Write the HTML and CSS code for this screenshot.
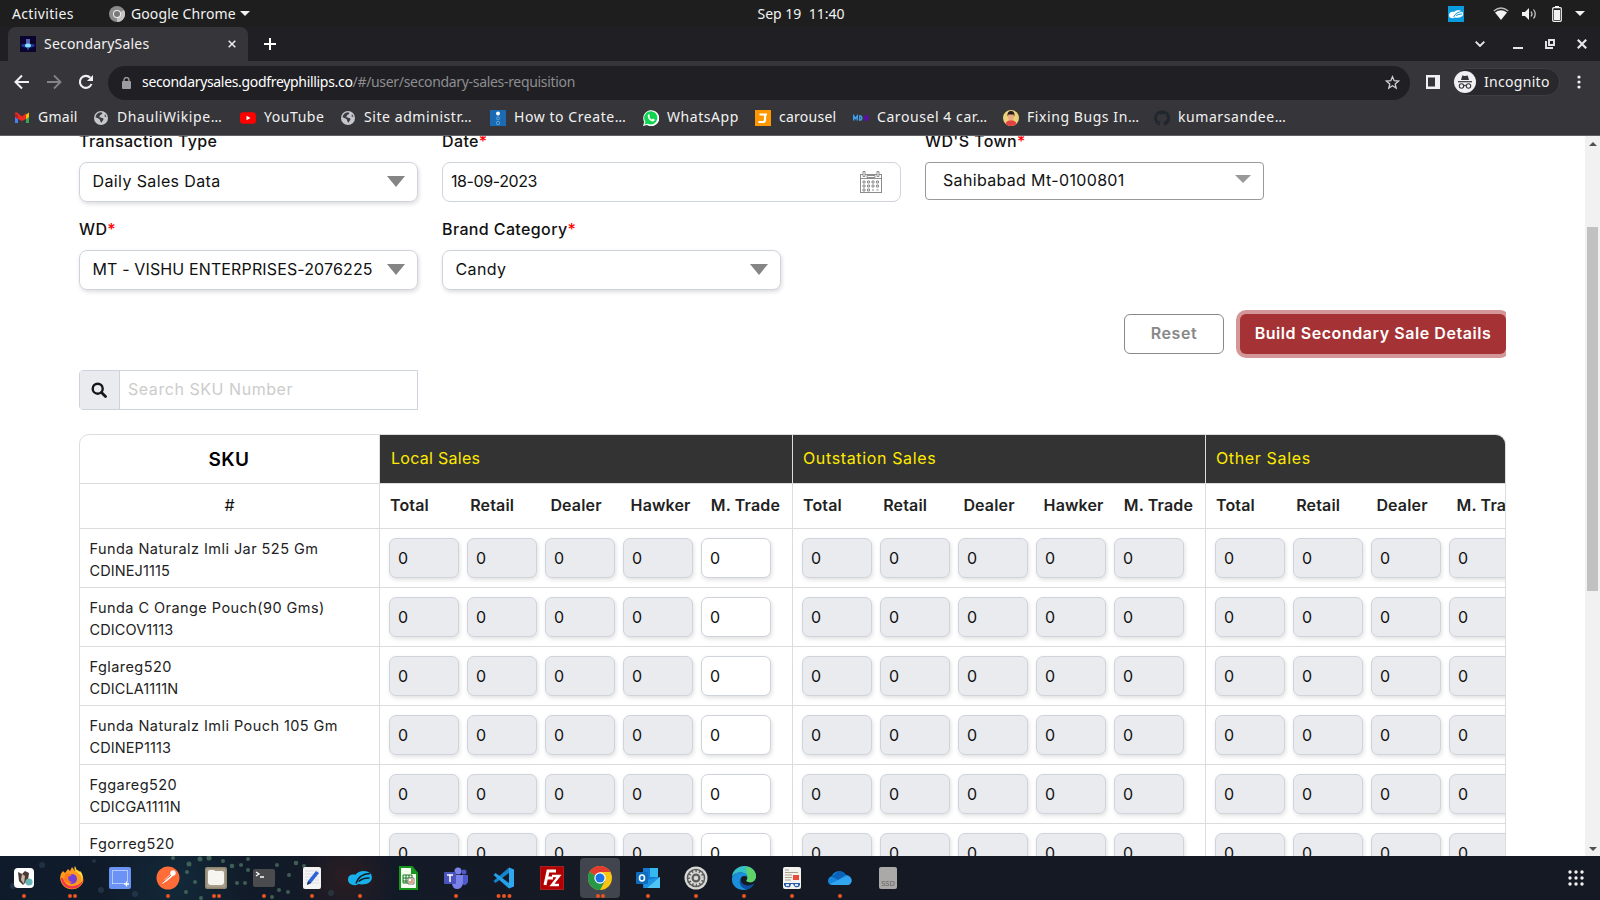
FILE: index.html
```html
<!DOCTYPE html>
<html lang="en">
<head>
<meta charset="utf-8">
<title>SecondarySales</title>
<link rel="stylesheet" href="styles.css">
</head>
<body>
<div class="screen">
  <header class="topbar">
    <span class="activities">Activities</span>
    <svg class="app-icon" width="16" height="16" viewBox="0 0 16 16"><circle cx="8" cy="8" r="8" fill="#8b8b8b"/><path d="M8 8L15 4A8 8 0 0 1 8 16z" fill="#c4c4c4"/><circle cx="8" cy="8" r="4" fill="#eee"/><circle cx="8" cy="8" r="3" fill="#777"/></svg>
    <span class="app-name">Google Chrome</span>
    <svg width="10" height="5" viewBox="0 0 10 5"><path d="M0 0h10L5 5z" fill="#f2f2f2"/></svg>
    <span class="clock">Sep 19&nbsp; 11:40</span>
    <div class="tray">
      <svg class="zs" width="16" height="16" viewBox="0 0 16 16"><rect width="16" height="16" fill="#0a9ade"/><path d="M1 9.500C1 6 4 5.500 6 6c2-2.500 7-2.500 8.500 0 1.500 3 0 5-3.500 5.500-1.500.4-3 .3-4 0-2 1.200-6 1-6-2z" fill="#fff"/><path d="M14 5.500Q8 6 5.500 11M8 9.500q3-1.500 6-1.500" stroke="#0a9ade" fill="none"/></svg>
      <svg class="wifi" width="16" height="14" viewBox="0 0 16 14"><path d="M.8 4Q8-2 15.200 4" stroke="#bbb" fill="none" stroke-width="1.300"/><path d="M2 5.500Q8 1 14 5.500L8 13z" fill="#f2f2f2"/></svg>
      <svg class="vol" width="16" height="14" viewBox="0 0 16 14"><path d="M0 5h3l4-4v12L3 9H0z" fill="#f2f2f2"/><path d="M9 4.500q2 2.500 0 5M11.500 2.500q3.500 4.500 0 9" fill="none" stroke="#ccc" stroke-width="1.200"/></svg>
      <svg class="bat" width="10" height="16" viewBox="0 0 10 16"><path d="M3 0h4v2H3z" fill="#f2f2f2"/><rect x=".7" y="1.700" width="8.600" height="13.600" rx="1" fill="none" stroke="#f2f2f2" stroke-width="1.200"/><path d="M2 4h6v10H2z" fill="#f2f2f2"/></svg>
      <svg width="10" height="5" viewBox="0 0 10 5"><path d="M0 0h10L5 5z" fill="#f2f2f2"/></svg>
    </div>
  </header>

  <div class="tabstrip">
    <div class="tab">
      <svg width="16" height="16" viewBox="0 0 16 16"><rect width="16" height="16" fill="#0b0430"/><ellipse cx="8" cy="9.500" rx="7" ry="2" fill="#1b3c9b"/><path d="M6 3h4v7H6z" fill="#5763b0"/><ellipse cx="8" cy="9.500" rx="3" ry="2" fill="#8de0ff"/><path d="M7 11h2l-1 4z" fill="#2b7de0"/></svg>
      <span class="tab-title">SecondarySales</span>
      <svg class="tab-close" width="8" height="8" viewBox="0 0 8 8"><path d="M.7.7l6.600 6.600M7.300.7L.7 7.300" stroke="#e8e8e8" stroke-width="1.600"/></svg>
    </div>
    <svg class="newtab" width="12" height="12" viewBox="0 0 12 12"><path d="M6 0v12M0 6h12" stroke="#fff" stroke-width="2"/></svg>
    <div class="winctl">
      <svg width="10" height="6" viewBox="0 0 10 6"><path d="M.7.7L5 5 9.300.7" stroke="#e6e6ea" stroke-width="1.900" fill="none"/></svg>
      <svg width="10" height="10" viewBox="0 0 10 10"><path d="M0 9h10" stroke="#e6e6ea" stroke-width="2"/></svg>
      <svg width="10" height="10" viewBox="0 0 10 10"><path d="M4 1h5v5H4zM1 2v7h7" stroke="#e6e6ea" stroke-width="1.900" fill="none"/></svg>
      <svg width="10" height="10" viewBox="0 0 10 10"><path d="M.8.8l8.400 8.400M9.200.8L.8 9.200" stroke="#e6e6ea" stroke-width="2.200"/></svg>
    </div>
  </div>

  <div class="toolbar">
    <svg class="nav" width="16" height="16" viewBox="0 0 16 16"><path d="M15 8H2M8 1.500L1.500 8 8 14.500" stroke="#f1f1f3" stroke-width="2" fill="none"/></svg>
    <svg class="nav" width="16" height="16" viewBox="0 0 16 16"><path d="M1 8h13M8 1.500L14.500 8 8 14.500" stroke="#848488" stroke-width="1.800" fill="none"/></svg>
    <svg class="nav" width="16" height="16" viewBox="0 0 16 16"><path d="M13.500 10A6 6 0 1 1 12.300 3.800" stroke="#f1f1f3" stroke-width="2.100" fill="none"/><path d="M15 1v6H9z" fill="#f1f1f3"/></svg>
    <div class="omnibox">
      <svg width="9" height="12" viewBox="0 0 9 12"><rect y="4" width="9" height="8" rx="1" fill="#9c9ca3"/><path d="M2 5V3a2.500 2.500 0 0 1 5 0v2" stroke="#9c9ca3" stroke-width="1.300" fill="none"/></svg>
      <span class="url"><b>secondarysales.godfreyphillips.co</b>/#/user/secondary-sales-requisition</span>
      <svg class="star" width="15" height="15" viewBox="0 0 15 15"><path d="M7.500 1.700l1.700 4 4.300.4-3.300 2.800 1 4.200-3.700-2.300-3.700 2.300 1-4.200L1.500 6.100l4.300-.4z" stroke="#cfcfd3" stroke-width="1.300" fill="none"/></svg>
    </div>
    <svg class="panel" width="14" height="14" viewBox="0 0 14 14"><rect width="14" height="14" fill="#f1f1f3"/><rect x="2" y="2.500" width="7" height="9" fill="#36363a"/></svg>
    <div class="incognito">
      <svg width="22" height="22" viewBox="0 0 22 22"><circle cx="11" cy="11" r="11" fill="#f1f1f3"/><path d="M7 9l1.300-4.500 2.700.5 2.700-.5L15 9z" fill="#35363a"/><path d="M4 10.700h14" stroke="#35363a" stroke-width="1.200"/><g fill="none" stroke="#35363a" stroke-width="1.100"><circle cx="7.500" cy="15" r="2.200"/><circle cx="14.500" cy="15" r="2.200"/><path d="M9.700 14.700q1.300-.8 2.600 0"/></g></svg>
      <span>Incognito</span>
    </div>
    <svg class="kebab" width="4" height="14" viewBox="0 0 4 14"><g fill="#f1f1f3"><circle cx="2" cy="2" r="1.600"/><circle cx="2" cy="7" r="1.600"/><circle cx="2" cy="12" r="1.600"/></g></svg>
  </div>

  <nav class="bookmarks">
    <a class="tight"><svg width="16" height="16" viewBox="0 0 16 16"><path d="M1 3.500V13h3V6z" fill="#4a7df0"/><path d="M15 3.500V13h-3V6z" fill="#33a852"/><path d="M11.500 5L15 2.500V7l-3 2z" fill="#fbbc05"/><path d="M1 7V3q1-1.500 3 .3l4 3.200 4-3.200V9L8 11 4 9z" fill="#ea2b20"/><path d="M1 3.500L4 5v4L1 7z" fill="#b51f2a"/></svg><span>Gmail</span></a>
    <a class="cut"><svg width="16" height="16" viewBox="0 0 16 16"><use href="#globe"/></svg><span>DhauliWikipe…</span></a>
    <a><svg width="16" height="16" viewBox="0 0 16 16"><rect y="2.300" width="16" height="11.500" rx="3" fill="#f00"/><path d="M6.500 5.800v4.500l4-2.250z" fill="#fff"/></svg><span>YouTube</span></a>
    <a class="cut"><svg width="16" height="16" viewBox="0 0 16 16"><g id="globe"><circle cx="8" cy="8" r="7" fill="#c5c7cd"/><path d="M8 2.300c2 .4 1.500 2 0 2.300S7.500 6.500 6 7l4 1.300c1.500.8-1 3.200-1.500 4.500-1.500-.5-.8-3-2.500-4L2.500 7.300A6 6 0 0 1 8 2.300zM12 4l1.500 3-2-.5z" fill="#3c3d43"/></g></svg><span>Site administr…</span></a>
    <a class="cut"><svg width="16" height="16" viewBox="0 0 16 16"><rect width="16" height="16" fill="#1a6bb3"/><circle cx="8" cy="3.500" r="2" fill="#fff"/><g fill="none" stroke="#5ea3d2"><circle cx="8" cy="8.300" r="1.500"/><circle cx="8" cy="13" r="1.700"/></g></svg><span>How to Create…</span></a>
    <a><svg width="16" height="16" viewBox="0 0 16 16"><path d="M0 16l1.200-4A8 8 0 1 1 4 15z" fill="#fff"/><path d="M1.600 14.500l.8-2.800a6.600 6.600 0 1 1 2.300 2z" fill="#10d34f"/><path d="M5 4.500l1.200-.3.800 2-.6.900q.9 1.700 2.500 2.300l1-.9 1.800.9c0 1.800-1.500 2.300-3 1.800C6.300 10.500 4 7.500 5 4.500z" fill="#fff"/></svg><span>WhatsApp</span></a>
    <a class="tight"><svg width="16" height="16" viewBox="0 0 16 16"><rect width="16" height="16" fill="#ff9800"/><path d="M4.500 4.500H12M10 4v6q0 2-2.300 2H3.500" stroke="#fff" stroke-width="2.200" fill="none"/></svg><span>carousel</span></a>
    <a class="cut"><svg width="16" height="16" viewBox="0 0 16 16"><path d="M.7 10.500V6l1.800 2.500L4.300 6v4.500M6.700 6v4h1.200q2-2 0-4z" stroke="#3fa0ef" stroke-width="1.400" fill="none"/><path d="M12.500 6v4h1.500q2-1 0-2 1.500-1 0-2z" stroke="#6a00c8" stroke-width="1.400" fill="none"/></svg><span>Carousel 4 car…</span></a>
    <a class="cut"><svg width="16" height="16" viewBox="0 0 16 16"><circle cx="8" cy="8" r="8" fill="#ecd17a"/><path d="M2.500 13.700q1-3.200 5.500-3.700 4.500.5 5.500 3.700a8 8 0 0 1-11 0z" fill="#e34242"/><ellipse cx="8" cy="6.500" rx="3" ry="4" fill="#e8aa84"/><path d="M4.500 6.500Q4 1 8 1t3.500 5.500L10.500 4.500h-5z" fill="#261b18"/></svg><span>Fixing Bugs In…</span></a>
    <a class="cut"><svg width="16" height="16" viewBox="0 0 16 16"><path d="M8 .3a7.800 7.800 0 0 0-2.500 15.200c.4 0 .5-.2.500-.4v-1.500c-2.200.5-2.700-1-2.700-1-.4-.9-.9-1.200-.9-1.200 1.200-.3 1.600 1 1.900 1.200.7.600 1.300.4 1.800.2.100-.5.3-.9.500-1.100C4.500 11.500 3 10.700 3 7.800c0-.8.300-1.500.8-2.100-.1-.5-.3-1.200.1-2.100 0 0 .7-.2 2.100.8q2-.5 4 0c1.500-1 2.100-.8 2.100-.8.400.9.200 1.600.1 2.100.5.600.8 1.300.8 2.100 0 2.900-1.500 3.700-3.500 3.900.4.300.6.800.6 1.500v2c0 .2.100.4.500.4A7.800 7.800 0 0 0 8 .3z" fill="#20262d"/></svg><span>kumarsandee…</span></a>
  </nav>

  <main class="viewport">
    <div class="content">
      <form class="filters">
        <div class="field w-sm"><label>Transaction Type</label><div class="select shadow"><span>Daily Sales Data</span><i class="caret"></i></div></div>
        <div class="field w-lg"><label>Date<em>*</em></label><div class="select date"><span>18-09-2023</span>
          <svg width="24" height="24" viewBox="0 0 24 24" fill="none" stroke="#8c8c8c"><rect x="1.500" y="4.500" width="21" height="18"/><path d="M1.500 8.500h21"/><path d="M4 1.500h2v5H4zM18 1.500h2v5h-2zM8 5.500h8v2H8z" fill="#fff"/><path d="M4 11h2v2H4zM8.500 11h2v2h-2zM13 11h2v2h-2zM17.500 11h2v2h-2zM4 15h2v2H4zM8.500 15h2v2h-2zM13 15h2v2h-2zM17.500 15h2v2h-2zM4 19h2v2H4zM8.500 19h2v2h-2zM13 20h2M17.500 20h2"/></svg></div></div>
        <div class="field w-sm"><label>WD'S Town<em>*</em></label><div class="select town"><span>Sahibabad Mt-0100801</span><i class="caret"></i></div></div>
        <div class="field w-sm"><label>WD<em>*</em></label><div class="select shadow"><span class="caps">MT - VISHU ENTERPRISES-2076225</span><i class="caret"></i></div></div>
        <div class="field w-sm"><label>Brand Category<em>*</em></label><div class="select shadow"><span>Candy</span><i class="caret"></i></div></div>
      </form>
      <div class="actions"><button class="reset">Reset</button><button class="build">Build Secondary Sale Details</button></div>
      <div class="search">
        <div class="addon"><svg width="16" height="16" viewBox="0 0 16 16"><circle cx="6.700" cy="6.700" r="5" fill="none" stroke="#15181b" stroke-width="2.400"/><path d="M10.500 10.500l4 4" stroke="#15181b" stroke-width="2.800" stroke-linecap="round"/></svg></div>
        <span>Search SKU Number</span>
      </div>
      <div class="sheet" id="sheet">
        <div class="cell sku-head">SKU</div><div class="cell group local">Local Sales</div><div class="cell group">Outstation Sales</div><div class="cell group">Other Sales</div>
        <div class="cell hash">#</div>
        <div class="cell heads"><b>Total</b><b>Retail</b><b>Dealer</b><b>Hawker</b><b>M. Trade</b></div>
        <div class="cell heads"><b>Total</b><b>Retail</b><b>Dealer</b><b>Hawker</b><b>M. Trade</b></div>
        <div class="cell heads"><b>Total</b><b>Retail</b><b>Dealer</b><b>M. Trade</b></div>
      </div>
    </div>
    <div class="scrollbar"><i class="up"></i><div class="thumb"></div><i class="down"></i></div>
  </main>

  <footer class="dock">
    <svg class="wallpaper" width="420" height="44" viewBox="0 0 420 44"><g fill="#4d7562" opacity=".75"><circle cx="173" cy="2" r="2"/><circle cx="189" cy="8" r="2.500"/><circle cx="200" cy="3" r="2.500"/><circle cx="209" cy="2" r="2.500"/><circle cx="187" cy="16" r="2"/><circle cx="195" cy="26" r="2"/><circle cx="186" cy="36" r="2"/><circle cx="201" cy="42" r="2"/><circle cx="223" cy="5" r="2"/><circle cx="232" cy="10" r="2.300"/><circle cx="241" cy="9" r="2"/><circle cx="248" cy="3" r="2"/><circle cx="237" cy="27" r="2"/><circle cx="245" cy="27" r="2"/><circle cx="248" cy="14" r="2"/><circle cx="277" cy="9" r="2"/><circle cx="289" cy="19" r="2"/><circle cx="296" cy="7" r="2.300"/><circle cx="288" cy="36" r="2"/><circle cx="272" cy="41" r="2"/><circle cx="279" cy="34" r="2"/><circle cx="304" cy="10" r="2"/></g><g fill="#33485c" opacity=".5"><circle cx="42" cy="9" r="3"/><circle cx="13" cy="30" r="3"/><circle cx="101" cy="34" r="3"/><circle cx="135" cy="38" r="3"/><circle cx="331" cy="37" r="3"/><circle cx="94" cy="5" r="2"/></g></svg>
    <div class="app"><svg viewBox="0 0 24 24"><rect x="2" y="2" width="20" height="20" rx="4" fill="#fff"/><path d="M6 6l4 2 3-3 4 2-1 7-5 5-4-4z" fill="#4a3a34"/><path d="M10 8l-1 6 3 4 1-8z" fill="#c9b8a9"/><circle cx="17" cy="16" r="3.600" fill="#66b7b5"/></svg><i data-n="1"></i></div>
    <div class="app"><svg viewBox="0 0 24 24"><path d="M12 1l3 4 3-1c5 5 7 10 4 14-4 7-16 7-20 0C-1 13 0 8 3 5l2 2 3-4 2 2z" fill="#ff9a1f"/><path d="M1 12c1 14 20 14 22 2-3 5-6 5-9 6-6 1-10-3-11-8z" fill="#f4354e"/><path d="M15 0q-2 4 3 7t3 9q4-7-1-11l-1 1q-3-2-4-6z" fill="#ffd83a"/><circle cx="12" cy="13" r="5" fill="#7440d8"/><path d="M5 8q4-2 7 1l-4 2q0 5 5 5-6 3-9-2z" fill="#ff7a1b"/></svg><i data-n="2"></i></div>
    <div class="app"><svg viewBox="0 0 24 24"><rect x="1" y="1" width="22" height="22" rx="2" fill="#6b93f5"/><path d="M4.500 17.500v-13h15v11M4.500 17.500H17" fill="none" stroke="#fff" stroke-dasharray="1 1"/><path d="M18.500 15.500v5M16 18h5" stroke="#fff" stroke-width="1.300"/></svg></div>
    <div class="app"><svg viewBox="0 0 24 24"><circle cx="12" cy="12" r="11.500" fill="#ff6c37"/><path d="M6 18l3-5 7-6 2 2-7 6z" fill="#fff"/><circle cx="17" cy="7" r="2.700" fill="#fff"/><path d="M7 16l8-7" stroke="#d4552a"/></svg><i data-n="1"></i></div>
    <div class="app"><svg viewBox="0 0 24 24"><rect x="1" y="1" width="22" height="22" rx="2" fill="#8f8672"/><rect x="2.500" y="2.500" width="19" height="19" rx="1" fill="#a79d88"/><path d="M4 6q0-2 2-2h4l1 1h7q2 0 2 2v9q0 3-3 3H7q-3 0-3-3z" fill="#f7f5f0"/></svg><i data-n="2"></i></div>
    <div class="app"><svg viewBox="0 0 24 24"><rect x="1" y="3" width="22" height="18" rx="2" fill="#4a4b4d"/><path d="M4 6l3 2-3 2M8 11h4" fill="none" stroke="#fff" stroke-width="1.300"/></svg><i data-n="1"></i></div>
    <div class="app"><svg viewBox="0 0 24 24"><rect x="3" y="1" width="18" height="22" rx="2" fill="#f4f4f4"/><path d="M5 5h14M5 8h14M5 11h14M5 14h14M5 17h14" stroke="#ddd"/><path d="M8 15L16 5l3 2-8 10-4 2z" fill="#2b62d9"/><path d="M7 19l1-4 3 2z" fill="#26364f"/></svg><i data-n="1"></i></div>
    <div class="app"><svg viewBox="0 0 24 24"><path d="M0 13.500C0 9 4 8 7.500 8.800 10 4 20 3.500 23 8c2.500 5-.5 9-5.500 10-2.500.6-5 .5-7 0C7 20.500 0 19 0 13.500z" fill="#17b2ec"/><path d="M22 7.500Q11 8 8 17.500M10.500 15.500q5-4 11-3.500" fill="none" stroke="#151923" stroke-width="1.500"/></svg><i data-n="1"></i></div>
    <div class="app"><svg viewBox="0 0 24 24"><path d="M4 1h12l5 6v16H4z" fill="#f5fff0" stroke="#15971c" stroke-width="2"/><path d="M15 1v7h6z" fill="#15971c"/><path d="M7 9h9v8H7zM7 12h9M7 15h9M10 9v8M13 9v8" fill="none" stroke="#15771c"/><path d="M12 12h6v6h-6z" fill="#fff" stroke="#777"/><path d="M14 17v-2M16 17v-4" stroke="#e46d2d" stroke-width="1.300"/></svg></div>
    <div class="app"><svg viewBox="0 0 24 24"><circle cx="20" cy="6" r="2.500" fill="#5059c9"/><circle cx="14" cy="5" r="3.500" fill="#7b83eb"/><path d="M17 9h7v7q-2 5-6 2z" fill="#5059c9"/><path d="M8 9h11v8q-1 6-6 6-4 0-5-5z" fill="#7b83eb"/><rect x="0" y="6" width="12" height="12" rx="1" fill="#4b53bc"/><path d="M3 9h6M6 9v7" stroke="#fff" stroke-width="1.500"/></svg><i data-n="1"></i></div>
    <div class="app"><svg viewBox="0 0 24 24"><path d="M17 1.500L1.500 15l2 2L17 7z" fill="#1683cd"/><path d="M17 22.500L1.500 9l2-2L17 17z" fill="#249fe8"/><path d="M17 1.500l5 2v17l-5 2z" fill="#30a8ef"/></svg><i data-n="3"></i></div>
    <div class="app"><svg viewBox="0 0 24 24"><rect x=".5" y=".5" width="23" height="23" fill="#b40000" stroke="#e33" stroke-dasharray="1 1"/><path d="M5 19L8 5h8M6 12h7" fill="none" stroke="#fff" stroke-width="3"/><path d="M12 10h7l-7 9h7" fill="none" stroke="#fff" stroke-width="2.500"/></svg></div>
    <div class="app active"><svg viewBox="0 0 24 24"><circle cx="12" cy="12" r="12" fill="#f9c513"/><path d="M12 12L1.600 6A12 12 0 0 1 22.400 6H12z" fill="#e33b2e"/><path d="M12 12L1.600 6A12 12 0 0 0 12 24l5-9z" fill="#279847"/><circle cx="12" cy="12" r="5.700" fill="#fff"/><circle cx="12" cy="12" r="4.500" fill="#1a73e8"/></svg><i data-n="2"></i></div>
    <div class="app"><svg viewBox="0 0 24 24"><path d="M7 2h15v20H7z" fill="#1479d0"/><path d="M14 2h8v9h-8z" fill="#35b8f1"/><path d="M7 15l17-4v11H8z" fill="#1d94e3"/><path d="M24 11L11 22h13z" fill="#50c4f4"/><rect x="0" y="6" width="12" height="12" rx="1" fill="#0f6cbd"/><ellipse cx="6" cy="12" rx="2.500" ry="3" fill="none" stroke="#fff" stroke-width="1.600"/></svg><i data-n="1"></i></div>
    <div class="app"><svg viewBox="0 0 24 24"><circle cx="12" cy="12" r="11.500" fill="#d8d8d5"/><circle cx="12" cy="12" r="9.300" fill="#5b5c5c"/><circle cx="12" cy="12" r="6.500" fill="none" stroke="#d8d8d5" stroke-width="2.500" stroke-dasharray="2.100 1.300"/><circle cx="12" cy="12" r="5.200" fill="none" stroke="#d8d8d5" stroke-width="1.500"/><circle cx="12" cy="12" r="2.300" fill="#d8d8d5"/></svg><i data-n="1"></i></div>
    <div class="app"><svg viewBox="0 0 24 24"><path d="M0 11C1-3 23-4 24 10c0 6-6 7.500-9 5.500-1.500-1 1-2 .5-4.500C14 5.500 4 4.500 0 11z" fill="#35c1c6"/><path d="M14 .5q9.500 2 10 9.500c0 6-6 7.500-9 5.500-1.500-1 1-2 .5-4.500z" fill="#5fd268"/><path d="M0 12C2 5 14 4 15.500 11 10 8 7 13 9 17q2 5 7 6.300C7 26-1 20 0 12z" fill="#1b8fdc"/><path d="M9 12c-1.500 6 6 10 13.500 5.500C20 22 17 23.300 15 23.500 8 22 6 16 9 12z" fill="#0f4f9f"/></svg><i data-n="1"></i></div>
    <div class="app"><svg viewBox="0 0 24 24"><rect x="3" y="1" width="18" height="22" rx="2" fill="#f3f2ef"/><path d="M5 4h4M5 6.500h13M5 9h7M5 11.500h7M5 14h6" stroke="#aaa08b"/><path d="M13 9h6v5h-6z" fill="#eb4a3c"/><path d="M4 17h16v2q-1 3-5 2l-2-3h-2l-1 3q-5 1-6-2z" fill="#2b5da5"/><path d="M6 18h3v2H6zM15 18h3v2h-3z" fill="#d7e6f4"/></svg><i data-n="1"></i></div>
    <div class="app"><svg viewBox="0 0 24 24"><path d="M5 19c-7 0-6-8-1-9 2-6 11-6 14-1 6 0 8 8 2 10z" fill="#1685dc"/><path d="M6 9c4-6 10-4 12 0l-8 5-7-4z" fill="#0b62b9"/><path d="M2 18l16-8c7 0 7 8 2 9H5z" fill="#32a5ee"/></svg><i data-n="1"></i></div>
    <div class="app"><svg viewBox="0 0 24 24"><rect x="3" y="1" width="18" height="22" rx="2" fill="#aaa9a8"/><text x="12" y="19.500" text-anchor="middle" class="ssd">SSD</text></svg></div>
    <svg class="grid-icon" width="16" height="16" viewBox="0 0 16 16" fill="#f2f2f2"><circle cx="2" cy="2" r="1.700"/><circle cx="8" cy="2" r="1.700"/><circle cx="14" cy="2" r="1.700"/><circle cx="2" cy="8" r="1.700"/><circle cx="8" cy="8" r="1.700"/><circle cx="14" cy="8" r="1.700"/><circle cx="2" cy="14" r="1.700"/><circle cx="8" cy="14" r="1.700"/><circle cx="14" cy="14" r="1.700"/></svg>
  </footer>
</div>
<script src="app.js"></script>
</body>
</html>
```
FILE: styles.css
```css
* { box-sizing: border-box; }
body { margin: 0; overflow: hidden; font-family: Inter, sans-serif; font-size: 16px; color: #111; background: #fff; }
svg { flex: none; display: block; }
.screen { width: 1600px; height: 900px; display: flex; flex-direction: column; overflow: hidden; }
.topbar, .tabstrip, .toolbar, .bookmarks { font-family: "Noto Sans", "Open Sans", sans-serif; color: #f2f2f2; white-space: nowrap; }

.topbar { position: relative; height: 27px; flex: none; background: #1e1e1e; display: flex; align-items: center; padding-left: 12px; font-size: 14px; }
.activities { width: 97px; letter-spacing: .35px; }
.app-name { margin: 0 5px 0 6px; width: 104px; letter-spacing: .1px; }
.clock { position: absolute; left: 0; right: 0; text-align: center; padding-left: 2px; padding-bottom: 1px; }
.tray { margin-left: auto; display: flex; align-items: center; padding-right: 15px; }
.zs { margin-right: 29px; }
.wifi { margin-right: 13px; }
.vol { margin-right: 14px; }
.bat { margin-right: 13px; }

.tabstrip { height: 34px; flex: none; background: #202024; display: flex; align-items: center; padding-left: 8px; }
.tab { width: 240px; height: 34px; background: #36363a; border-radius: 8px 8px 0 0; display: flex; align-items: center; padding: 0 12px; font-size: 14px; }
.tab-title { margin-left: 8px; padding-bottom: 1px; letter-spacing: .2px; }
.tab-close { margin-left: auto; }
.newtab { margin-left: 16px; }
.winctl { margin-left: auto; padding-right: 13px; display: flex; align-items: center; gap: 22px; }
.winctl svg:first-child { margin-right: 6px; }

.toolbar { height: 41px; flex: none; background: #36363a; display: flex; align-items: center; padding: 0 19px 0 14px; }
.nav { margin: 1px 16px 0 0; }
.omnibox { width: 1302px; height: 34px; margin-left: -2px; margin-top: 2px; border-radius: 17px; background: #202024; display: flex; align-items: center; padding: 0 10px 0 14px; font-size: 14px; color: #8d8d90; }
.url { margin-left: 11px; padding-bottom: 2px; letter-spacing: -.32px; }
.url b { font-weight: 400; color: #fff; }
.star { margin-left: auto; }
.panel { margin-left: 16px; }
.incognito { width: 107px; height: 28px; margin: 1px 0 0 13px; border-radius: 14px; background: #29292d; border: 1px solid #3f3f43; display: flex; align-items: center; gap: 8px; font-size: 14px; letter-spacing: .3px; padding-left: 0; }
.incognito span { padding-bottom: 1px; }
.kebab { margin-left: 17px; }

.bookmarks { height: 34px; flex: none; background: #36363a; border-bottom: 1px solid #625f64; display: grid; grid-template-columns: 79px 147px 100px 150px 153px 112px 98px 150px 151px 150px; align-items: center; padding: 0 0 4px 14px; font-size: 14px; letter-spacing: .55px; }
.bookmarks a { display: flex; align-items: center; gap: 8px; }
.bookmarks .tight { letter-spacing: .25px; }
.bookmarks .cut { letter-spacing: .57px; }
.bookmarks svg { position: relative; top: 1px; }

.viewport { height: 720px; flex: none; display: flex; overflow: hidden; background: #fff; }
.content { width: 1585px; height: 720px; padding: 0 79px; margin-top: -7px; }
.filters { width: 1427px; display: flex; flex-wrap: wrap; gap: 15px 24px; align-items: flex-start; }
.field label { display: block; height: 24px; line-height: 24px; margin-bottom: 9px; font-weight: 500; color: #111; letter-spacing: .38px; }
.field em { color: #f00; font-style: normal; letter-spacing: 0; }
.w-sm { width: 339px; }
.w-lg { width: 459px; }
.select { height: 40px; border: 1px solid #cfd3de; border-radius: 8px; display: flex; align-items: center; justify-content: space-between; padding: 0 12px 2px 12.500px; white-space: nowrap; letter-spacing: .38px; }
.select .caps { letter-spacing: .13px; }
.shadow { box-shadow: 1px 2px 4px rgba(0, 0, 0, .14); }
.select.date { padding: 0 17px 0 8px; letter-spacing: -.4px; }
.select.date span { padding-bottom: 2px; }
.select.town { height: 38px; border-color: #999; border-radius: 4px; padding-left: 17px; padding-right: 12px; letter-spacing: .33px; }
.caret { border: 9px solid transparent; border-top: 11px solid #858585; border-bottom: 0; }
.town .caret { border-width: 8px 8px 0; border-top-color: #999; margin-top: -2px; }
.actions { display: flex; justify-content: flex-end; gap: 16px; height: 48px; padding: 4px 0; margin: 20px 0 0; width: 1427px; overflow: hidden; }
.actions button { height: 40px; border-radius: 6px; font: 600 16px Inter, sans-serif; padding: 0 0 2px; white-space: nowrap; letter-spacing: .56px; }
.reset { width: 100px; border: 1px solid #888; background: #fff; color: #888; }
.build { width: 266px; border: 0; background: #a53235; color: #fff; box-shadow: 0 0 0 4px #d49799; }
.search { width: 339px; height: 40px; margin: 12px 0 24px; border: 1px solid #ced2dc; border-radius: 4px 0 0 4px; display: flex; align-items: center; color: #ccc; letter-spacing: .55px; }
.search span { padding-bottom: 2px; }
.addon { width: 40px; height: 38px; margin-right: 8px; padding-right: 1px; background: #e9ebef; border-right: 1px solid #ced2dc; display: grid; place-items: center; }

.sheet { width: 1427px; border: 1px solid #dbdcdf; border-radius: 10px 10px 0 0; overflow: hidden; display: grid; grid-template-columns: 300px 413px 413px 413px; grid-template-rows: 49px 45px; grid-auto-rows: 59px; }
.cell { border-right: 1px solid #dbdcdf; border-bottom: 1px solid #dbdcdf; min-width: 0; display: flex; align-items: center; }
.sku-head { justify-content: center; font-weight: 600; font-size: 19px; letter-spacing: .5px; color: #000; padding-right: 1px; }
.group { background: #333; color: #ffeb00; padding: 0 10px 3px; letter-spacing: .64px; }
.group.local { padding-left: 11px; letter-spacing: .28px; }
.hash { justify-content: center; padding-bottom: 2px; }
.heads { padding: 0 0 2px 10px; color: #222; letter-spacing: .15px; }
.heads b { width: 80.2px; flex: none; font-weight: 600; white-space: nowrap; }
.name { padding: 4px 9px 0 9.500px; line-height: 22px; font-size: 14.5px; color: #222; white-space: nowrap; letter-spacing: .44px; }
.name .code { letter-spacing: .1px; }
.inputs { padding-left: 9px; gap: 8px; }
.qty { width: 70px; height: 40px; flex: none; border: 1px solid #cfd3dc; border-radius: 7px; background: #e9ebef; box-shadow: 1px 2px 4px rgba(0, 0, 0, .12); padding-left: 8px; line-height: 38px; }
.qty.open { background: #fff; }

.scrollbar { width: 15px; height: 720px; background: #f1f1f1; display: flex; flex-direction: column; align-items: center; padding: 6px 0 5px; }
.up { border: 4px solid transparent; border-bottom-color: #505050; border-top: 0; }
.down { border: 4px solid transparent; border-top-color: #505050; border-bottom: 0; margin-top: auto; }
.thumb { width: 11px; height: 364px; margin-top: 81px; background: #c1c1c1; }

.dock { position: relative; height: 44px; flex: none; display: flex; background: radial-gradient(circle at 345px 22px, #2b1d22 0, transparent 50px), radial-gradient(circle at 175px 25px, #122a3a 0, transparent 75px), linear-gradient(90deg, #0f1b2b, #131a27 400px, #151923 600px); }
.wallpaper { position: absolute; left: 0; top: 0; }
.app { position: relative; width: 48px; height: 44px; display: flex; justify-content: center; padding-top: 10px; }
.app svg { width: 24px; height: 24px; position: relative; }
.app.active::before { content: ""; position: absolute; left: 4px; top: 2px; width: 40px; height: 40px; border-radius: 4px; background: #41454d; }
.app i { position: absolute; top: 38px; left: 22px; width: 4px; height: 4px; border-radius: 2px; background: #e95420; }
.app i[data-n="2"] { left: 19.500px; box-shadow: 5px 0 #e95420; }
.app i[data-n="3"] { box-shadow: -5.500px 0 #e95420, 5.500px 0 #e95420; }
.ssd { font: 7.500px "Noto Sans", sans-serif; fill: #666; }
.grid-icon { margin: 14px 16px 0 auto; }
```
FILE: app.js
```js
const rows = [
  ["Funda Naturalz Imli Jar 525 Gm", "CDINEJ1115"],
  ["Funda C Orange Pouch(90 Gms)", "CDICOV1113"],
  ["Fglareg520", "CDICLA1111N"],
  ["Funda Naturalz Imli Pouch 105 Gm", "CDINEP1113"],
  ["Fggareg520", "CDICGA1111N"],
  ["Fgorreg520", "&nbsp;"]
];
const quantities = (count, openIndex) =>
  '<div class="cell inputs">' +
  Array.from({ length: count }, (_, i) => `<div class="qty${i === openIndex ? " open" : ""}">0</div>`).join("") +
  "</div>";

document.getElementById("sheet").insertAdjacentHTML("beforeend", rows.map(([name, code]) =>
  `<div class="cell name"><span>${name}<br><span class="code">${code}</span></span></div>` +
  quantities(5, 4) + quantities(5, -1) + quantities(4, -1)
).join(""));
```
